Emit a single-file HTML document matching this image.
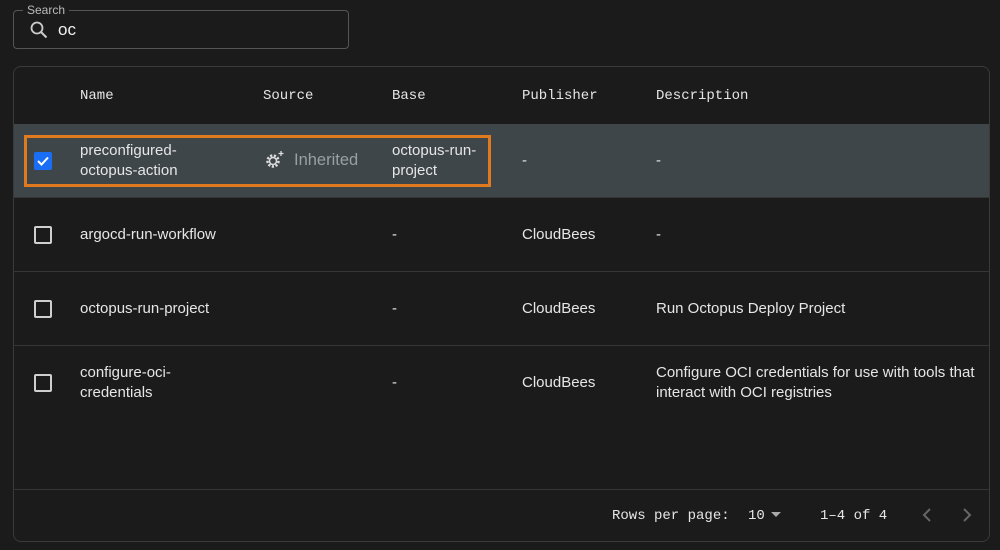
<!DOCTYPE html>
<html><head><style>
body{margin:0;width:1000px;height:550px;background:#1b1b1b;font-family:"Liberation Sans",sans-serif;color:#e8e8e8;position:relative;overflow:hidden}
.a{position:absolute}
.mono{font-family:"Liberation Mono",monospace;font-size:14px;color:#e6e6e6}
.t{font-size:15px;line-height:20px;color:#e6e6e6}
.cb{position:absolute;left:34px;width:14px;height:14px;border:2px solid #cfcfcf;border-radius:2px}
.hr{position:absolute;left:14px;width:975px;height:1px;background:#353535}
</style></head><body>
<div class="a" style="left:13px;top:10px;width:334px;height:37px;border:1px solid #555;border-radius:4px"></div>
<div class="a" style="left:23px;top:3px;padding:0 4px;background:#1b1b1b;font-size:12px;color:#bbb">Search</div>
<svg class="a" style="left:29px;top:20px" width="20" height="20" viewBox="0 0 20 20"><circle cx="8" cy="8" r="5.5" fill="none" stroke="#ccc" stroke-width="1.8"/><path d="M12 12l5.5 5.5" stroke="#ccc" stroke-width="2"/></svg>
<div class="a" style="left:58px;top:20px;font-size:17px;color:#eee;font-weight:500">oc</div>

<div class="a" style="left:13px;top:66px;width:975px;height:474px;border:1px solid #3a3a3a;border-radius:8px"></div>
<div class="a mono" style="left:80px;top:88px">Name</div>
<div class="a mono" style="left:263px;top:88px">Source</div>
<div class="a mono" style="left:392px;top:88px">Base</div>
<div class="a mono" style="left:522px;top:88px">Publisher</div>
<div class="a mono" style="left:656px;top:88px">Description</div>

<div class="a" style="left:14px;top:124px;width:975px;height:74px;background:#3e4649"></div>
<div class="a" style="left:24px;top:135px;width:461px;height:46px;border:3px solid #e07a1f"></div>
<div class="a" style="left:34px;top:152px;width:18px;height:18px;background:#1a6ef5;border-radius:2px"></div>
<svg class="a" style="left:34px;top:152px" width="18" height="18"><path d="M4 9l3.5 3.5L14 5.5" fill="none" stroke="#fff" stroke-width="2"/></svg>
<div class="a t" style="left:80px;top:141px">preconfigured-<br>octopus-action</div>
<svg class="a" style="left:263px;top:150px" width="22" height="20" viewBox="0 0 22 20"><circle cx="10" cy="11" r="5.5" fill="none" stroke="#ddd" stroke-width="2.5" stroke-dasharray="2.2 1.6"/><circle cx="10" cy="11" r="3.5" fill="none" stroke="#ddd" stroke-width="1.5"/><path d="M18 1v5M15.5 3.5h5" stroke="#ddd" stroke-width="1.3"/></svg>
<div class="a" style="left:294px;top:151px;font-size:16.5px;color:#9a9fa1">Inherited</div>
<div class="a t" style="left:392px;top:141px">octopus-run-<br>project</div>
<div class="a t" style="left:522px;top:151px">-</div>
<div class="a t" style="left:656px;top:151px">-</div>

<div class="hr" style="top:197px"></div>
<div class="cb" style="top:226px"></div>
<div class="a t" style="left:80px;top:225px">argocd-run-workflow</div>
<div class="a t" style="left:392px;top:225px">-</div>
<div class="a t" style="left:522px;top:225px">CloudBees</div>
<div class="a t" style="left:656px;top:225px">-</div>

<div class="hr" style="top:271px"></div>
<div class="cb" style="top:300px"></div>
<div class="a t" style="left:80px;top:299px">octopus-run-project</div>
<div class="a t" style="left:392px;top:299px">-</div>
<div class="a t" style="left:522px;top:299px">CloudBees</div>
<div class="a t" style="left:656px;top:299px">Run Octopus Deploy Project</div>

<div class="hr" style="top:345px"></div>
<div class="cb" style="top:374px"></div>
<div class="a t" style="left:80px;top:363px">configure-oci-<br>credentials</div>
<div class="a t" style="left:392px;top:373px">-</div>
<div class="a t" style="left:522px;top:373px">CloudBees</div>
<div class="a t" style="left:656px;top:363px">Configure OCI credentials for use with tools that<br>interact with OCI registries</div>

<div class="hr" style="top:489px"></div>
<div class="a mono" style="left:612px;top:508px">Rows per page:</div>
<div class="a mono" style="left:748px;top:508px">10</div>
<svg class="a" style="left:771px;top:512px" width="10" height="6"><path d="M0 0h10L5 5z" fill="#aaa"/></svg>
<div class="a mono" style="left:820px;top:508px">1–4 of 4</div>
<svg class="a" style="left:922px;top:508px" width="10" height="14"><path d="M8 1L2 7l6 6" fill="none" stroke="#666" stroke-width="2"/></svg>
<svg class="a" style="left:962px;top:508px" width="10" height="14"><path d="M2 1l6 6-6 6" fill="none" stroke="#666" stroke-width="2"/></svg>
</body></html>
